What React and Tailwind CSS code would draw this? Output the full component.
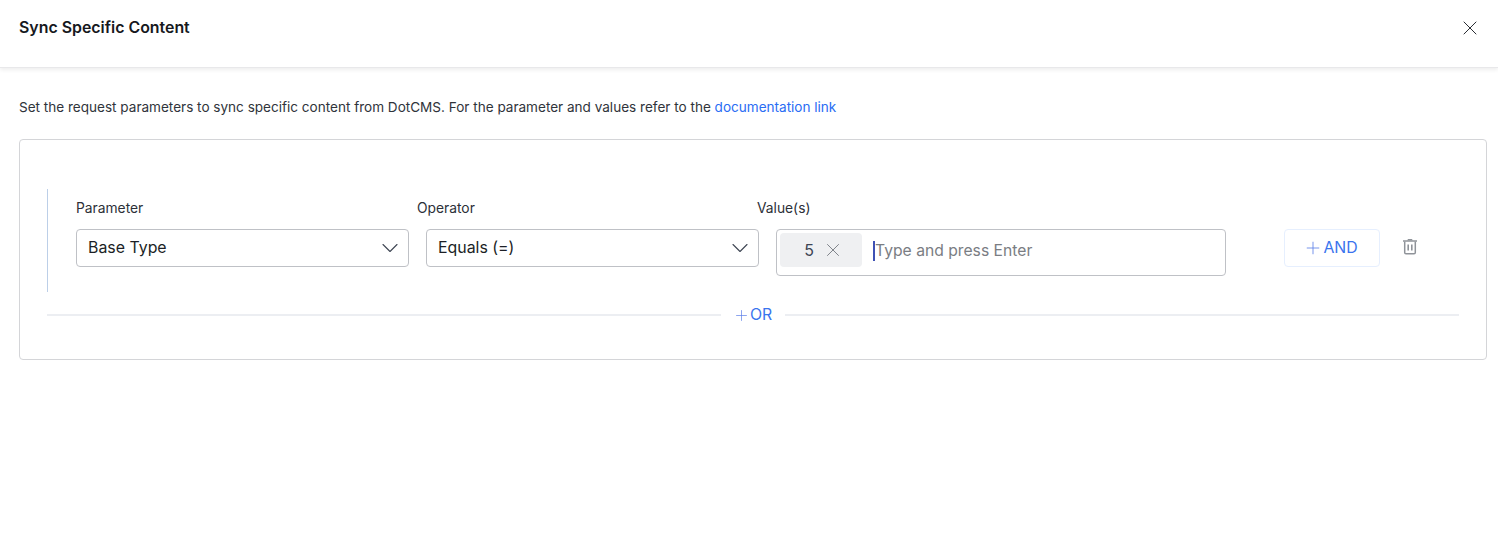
import { ChevronDown, X, Plus } from "lucide-react";

function Select({ value }) {
  return (
    <div className="w-[333px] h-[38px] border border-[#bfc1c6] rounded-[4px] flex items-center justify-between pl-[11px] pr-[4px] text-[15.9px] text-[#1c1f26] bg-white">
      <span className="leading-[20px] mb-[1px]">{value}</span>
      <ChevronDown size={28} strokeWidth={0.95} className="text-[#3f4654] -mt-px" />
    </div>
  );
}

function TrashIcon() {
  return (
    <svg width="16" height="17" viewBox="0 0 16 17" fill="none">
      <path d="M5.2 2.5 L6 1 H10 L10.8 2.5 Z" fill="#8f9399" />
      <path d="M1 3 H15" stroke="#8f9399" strokeWidth="1.5" />
      <path d="M2.7 3.5 V14.5 Q2.7 15.8 4 15.8 H12 Q13.3 15.8 13.3 14.5 V3.5" stroke="#8f9399" strokeWidth="1.5" />
      <path d="M6.2 6.5 V12.5 M9.8 6.5 V12.5" stroke="#8f9399" strokeWidth="1.6" />
    </svg>
  );
}

export default function App() {
  return (
    <div className="w-[1498px] h-[548px] bg-white font-['Inter',sans-serif] text-[#1c1f26] overflow-hidden">
      {/* Header */}
      <header className="h-[68px] flex items-center justify-between pl-[19px] pr-[16px] pb-[12px] border-b border-[#e8e8ea] shadow-[0_2px_4px_rgba(0,0,0,0.07)]">
        <h1 className="text-[15.9px] leading-[24px] font-semibold text-[#16181d]">Sync Specific Content</h1>
        <button className="text-[#2a2d33]">
          <X size={24} strokeWidth={1} />
        </button>
      </header>

      <main className="pl-[19px] pr-[11px] pt-[29px]">
        <p className="text-[13.55px] leading-[20px] text-[#30343b]">
          Set the request parameters to sync specific content from DotCMS. For the parameter and values refer to the{" "}
          <a className="text-[#2a6df4]">documentation link</a>
        </p>

        {/* Rules card */}
        <section className="mt-[22px] h-[221px] border border-[#d4d5d8] rounded-[4px] pt-[49px] pl-[27px] pr-[27px]">
          <div className="h-[103px] border-l border-[#bccfe8] pl-[28px] pt-[10px]">
            <div className="flex text-[13.8px] leading-[18px] text-[#2c3038]">
              <label className="w-[341px]">Parameter</label>
              <label className="w-[340px]">Operator</label>
              <label>Value(s)</label>
            </div>
            <div className="flex items-start mt-[12px]">
              <Select value="Base Type" />
              <div className="ml-[17px]">
                <Select value="Equals (=)" />
              </div>
              <div className="ml-[17px] w-[450px] h-[47px] border border-[#bfc1c6] rounded-[4px] flex items-start pl-[3px] pt-[3px]">
                <span className="w-[82px] h-[34px] bg-[#eff0f2] rounded-[4px] flex items-center justify-center gap-[8px] pl-[6px] text-[16px] text-[#3c4454]">
                  5
                  <X size={22} strokeWidth={0.95} className="text-[#6f737a]" />
                </span>
                <span className="ml-[11px] mt-[8px] h-[20px] border-l-2 border-[#3f51b5] text-[15.7px] leading-[20px] text-[#7a7d83]">
                  Type and press Enter
                </span>
              </div>
              <button className="ml-[58px] w-[96px] h-[38px] border border-[#e6effe] rounded-[4px] flex items-center justify-center pr-[3px] text-[15.8px] text-[#3a74ee]">
                <Plus size={20} strokeWidth={1} className="text-[#5d80e8]" />
                <span className="leading-[20px] mb-[1px]">AND</span>
              </button>
              <span className="ml-[22px] mt-[9px]">
                <TrashIcon />
              </span>
            </div>
          </div>

          {/* OR divider */}
          <div className="flex items-center h-[46px]">
            <div className="flex-1 h-[2px] bg-[#eceef2]" />
            <button className="pl-[12px] pr-[13px] flex items-center text-[15.8px] text-[#3a74ee]">
              <Plus size={17} strokeWidth={1} className="text-[#5d80e8]" />
              <span className="leading-[20px] mb-[1px]">OR</span>
            </button>
            <div className="flex-1 h-[2px] bg-[#eceef2]" />
          </div>
        </section>
      </main>
    </div>
  );
}
